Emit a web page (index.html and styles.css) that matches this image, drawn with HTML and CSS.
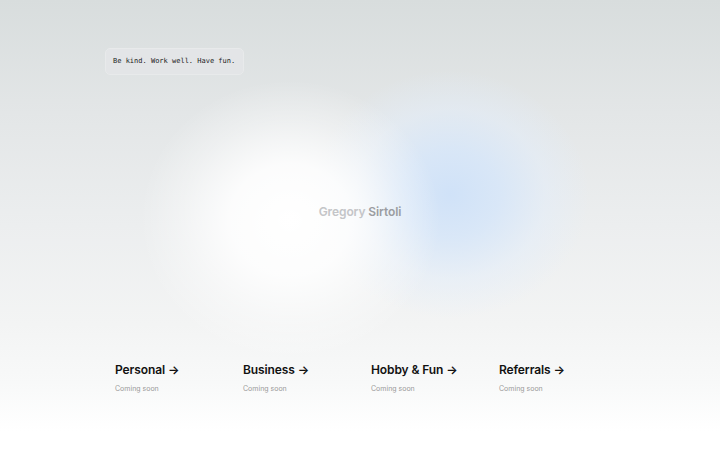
FILE: index.html
```html
<!DOCTYPE html>
<html>
<head>
<meta charset="utf-8">
<link rel="stylesheet" href="styles.css">
</head>
<body>
<div class="page">
  <div class="blob blob-blue"></div>
  <div class="blob blob-white"></div>
  <header class="top">
    <div class="badge">Be kind. Work well. Have fun.</div>
  </header>
  <section class="hero">
    <h1 class="name"><span class="first">Gregory</span> <span class="last">Sirtoli</span></h1>
  </section>
  <section class="links">
    <div class="card"><div class="title">Personal →</div><div class="sub">Coming soon</div></div>
    <div class="card"><div class="title">Business →</div><div class="sub">Coming soon</div></div>
    <div class="card"><div class="title">Hobby &amp; Fun →</div><div class="sub">Coming soon</div></div>
    <div class="card"><div class="title">Referrals →</div><div class="sub">Coming soon</div></div>
  </section>
</div>
</body>
</html>
```
FILE: styles.css
```css
html, body {
  margin: 0;
  padding: 0;
}
body {
  width: 720px;
  height: 450px;
  overflow: hidden;
  font-family: Inter, "Noto Sans", sans-serif;
}
.page {
  position: relative;
  width: 720px;
  height: 450px;
  background: linear-gradient(to bottom, #d8dddd 0%, #e3e6e7 25%, #eceeef 50%, #f3f4f4 72%, #f8f9f9 85%, #ffffff 96%);
  display: flex;
  flex-direction: column;
  overflow: hidden;
}
.blob {
  position: absolute;
  border-radius: 50%;
  pointer-events: none;
}
.blob-white {
  left: 140px;
  top: 80px;
  width: 300px;
  height: 280px;
  background: radial-gradient(closest-side, rgba(255,255,255,1) 0%, rgba(255,255,255,0.85) 40%, rgba(255,255,255,0.35) 72%, rgba(255,255,255,0) 100%);
}
.blob-blue {
  left: 300px;
  top: 70px;
  width: 290px;
  height: 270px;
  background: radial-gradient(closest-side at 52% 46%, rgba(208,226,248,1) 0%, rgba(214,230,249,0.85) 35%, rgba(226,237,250,0.5) 68%, rgba(235,242,250,0) 100%);
}
.top {
  position: relative;
  padding: 48px 0 0 105px;
  display: flex;
}
.badge {
  font-family: "DejaVu Sans Mono", "Liberation Mono", monospace;
  font-size: 7px;
  color: #222;
  background: #e3e5e7;
  border: 1px solid #e8eaeb;
  border-radius: 5px;
  padding: 0 8px 0 7px;
  height: 25px;
  line-height: 25px;
}
.hero {
  position: relative;
  height: 274px;
  flex: none;
  display: flex;
  align-items: center;
  justify-content: center;
}
.name {
  margin: 0;
  font-size: 12px;
  font-weight: 600;
  letter-spacing: -0.1px;
  line-height: 16px;
}
.first { color: #c4c5c8; }
.last { color: #9b9da1; }
.links {
  position: relative;
  padding: 13px 0 0 115px;
  display: grid;
  grid-template-columns: repeat(4, 106px);
  column-gap: 22px;
}
.title {
  font-size: 12px;
  font-weight: 600;
  color: #111;
  letter-spacing: -0.1px;
  line-height: 16px;
}
.sub {
  margin-top: 6px;
  font-size: 7px;
  color: #999999;
  line-height: 10px;
}
```
